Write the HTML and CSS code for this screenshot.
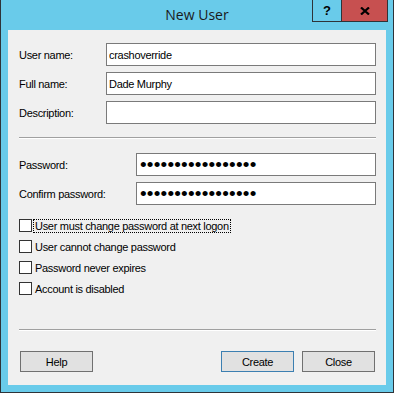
FILE: index.html
```html
<!DOCTYPE html>
<html lang="en">
<head>
    <meta charset="UTF-8">
    <meta name="viewport" content="width=device-width, initial-scale=1.0">
    <title>New User</title>
    <link rel="stylesheet" href="styles.css">
</head>
<body>
    <div class="window">
        <div class="titlebar">
            <span class="title">New User</span>
            <div class="caption-buttons">
                <button class="caption help-cap">?</button>
                <button class="caption close-cap">
                    <svg width="10" height="8" viewBox="0 0 10 8">
                        <path d="M1 0.5 L9 7.5 M9 0.5 L1 7.5" stroke="#000" stroke-width="2.2" fill="none"/>
                    </svg>
                </button>
            </div>
        </div>

        <div class="client">
            <div class="fields names">
                <label>User name:</label>
                <input type="text" value="crashoverride" readonly>
                <label>Full name:</label>
                <input type="text" value="Dade Murphy" readonly>
                <label>Description:</label>
                <input type="text" value="" readonly>
            </div>

            <div class="separator"></div>

            <div class="fields passwords">
                <label>Password:</label>
                <input type="password" value="crashoverride1995" readonly>
                <label>Confirm password:</label>
                <input type="password" value="crashoverride1995" readonly>
            </div>

            <div class="options">
                <label class="option"><input type="checkbox"><span class="focused">User must change password at next logon</span></label>
                <label class="option"><input type="checkbox"><span>User cannot change password</span></label>
                <label class="option"><input type="checkbox"><span>Password never expires</span></label>
                <label class="option"><input type="checkbox"><span>Account is disabled</span></label>
            </div>

            <div class="separator bottom"></div>

            <div class="actions">
                <button class="btn">Help</button>
                <div class="right">
                    <button class="btn default">Create</button>
                    <button class="btn">Close</button>
                </div>
            </div>
        </div>
    </div>
</body>
</html>
```

FILE: styles.css
```css
* { box-sizing: border-box; }

body {
    margin: 0;
    font-family: "Liberation Sans", Arial, sans-serif;
    font-size: 11px;
    letter-spacing: -0.3px;
    color: #000;
}

.window {
    position: relative;
    width: 394px;
    height: 393px;
    background: #69cbea;
    border: 1px solid #2e3338;
    border-top: none;
    padding: 0 7px 7px;
    display: flex;
    flex-direction: column;
}

.titlebar {
    height: 30px;
    display: flex;
    align-items: center;
    justify-content: center;
}
.title {
    font-family: "Open Sans", sans-serif;
    font-size: 14px;
    letter-spacing: 0;
    color: #1a1a1a;
    margin-top: -1px;
}

.caption-buttons {
    position: absolute;
    top: 0;
    right: 5px;
    display: flex;
}
.caption {
    height: 22px;
    border: 1px solid #2e3338;
    border-top: none;
    padding: 0;
    margin: 0;
    display: flex;
    align-items: center;
    justify-content: center;
}
.help-cap {
    width: 29px;
    background: #69cbea;
    border-right: none;
    font-family: "Liberation Sans", sans-serif;
    font-weight: bold;
    font-size: 13px;
    color: #000;
}
.close-cap {
    width: 47px;
    background: #c75050;
}

.client {
    flex: 1;
    background: #f0f0f0;
    padding: 13px 10px 13px 11px;
    display: flex;
    flex-direction: column;
}

.fields {
    display: grid;
    row-gap: 6px;
    align-items: center;
}
.names { grid-template-columns: 87px minmax(0, 1fr); }
.passwords { grid-template-columns: 117px minmax(0, 1fr); margin-top: 14px; }

.fields input {
    width: 100%;
    min-width: 0;
    height: 23px;
    border: 1px solid #7a7a7a;
    background: #fff;
    padding: 0 2px;
    font-family: "Liberation Sans", Arial, sans-serif;
    font-size: 11px;
    letter-spacing: -0.3px;
    color: #000;
    outline: none;
}
.fields input[type=password] {
    font-size: 19px;
    letter-spacing: 0.2px;
    padding: 0 3px;
}

.separator {
    height: 2px;
    border-top: 1px solid #a0a0a0;
    border-bottom: 1px solid #fff;
    margin-top: 13px;
}

.options {
    margin-top: 14px;
    display: flex;
    flex-direction: column;
    gap: 8px;
}
.option {
    display: flex;
    align-items: center;
    height: 13px;
}
.option input {
    appearance: none;
    width: 13px;
    height: 13px;
    margin: 0 2px 0 0;
    border: 1px solid #333;
    background: #fff;
}
.option span {
    padding: 0 1px;
    line-height: 12px;
}
.option .focused {
    outline: 1px dotted #000;
    outline-offset: 0;
}

.separator.bottom { margin-top: auto; }

.actions {
    margin-top: 20px;
    display: flex;
    justify-content: space-between;
    padding: 0 1px 0 1px;
}
.right { display: flex; gap: 8px; }
.btn {
    width: 73px;
    height: 21px;
    background: #e1e1e1;
    border: 1px solid #707070;
    font-family: "Liberation Sans", Arial, sans-serif;
    font-size: 11px;
    letter-spacing: -0.3px;
    color: #000;
    padding: 0;
}
.btn.default { border-color: #3c7fb1; }
```
